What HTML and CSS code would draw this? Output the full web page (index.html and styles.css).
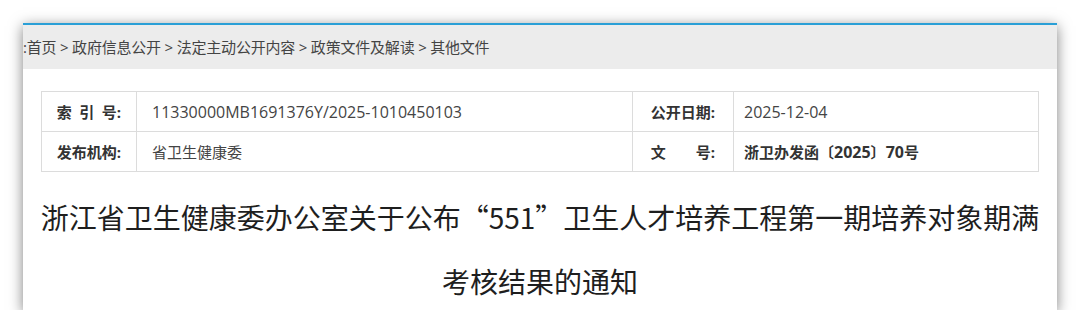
FILE: index.html
```html
<!DOCTYPE html>
<html lang="zh-CN">
<head>
    <meta charset="UTF-8">
    <meta name="viewport" content="width=device-width, initial-scale=1.0">
    <title>其他文件</title>
    <link rel="stylesheet" href="styles.css">
</head>
<body>
    <div class="page">
        <div class="crumbs">:首页 &gt; 政府信息公开 &gt; 法定主动公开内容 &gt; 政策文件及解读 &gt; 其他文件</div>

        <table class="info">
            <colgroup>
                <col class="c-label">
                <col class="c-value">
                <col class="c-label2">
                <col>
            </colgroup>
            <tr>
                <th><span class="lbl">索引号</span>:</th>
                <td class="num">11330000MB1691376Y/2025-1010450103</td>
                <th><span class="lbl">公开日期</span>:</th>
                <td class="v-right num">2025-12-04</td>
            </tr>
            <tr>
                <th><span class="lbl">发布机构</span>:</th>
                <td>省卫生健康委</td>
                <th><span class="lbl">文号</span>:</th>
                <td class="v-right strong">浙卫办发函〔<span class="num">2025</span>〕<span class="num">70</span>号</td>
            </tr>
        </table>

        <h1 class="title">浙江省卫生健康委办公室关于公布“551”卫生人才培养工程第一期培养对象期满考核结果的通知</h1>
    </div>
</body>
</html>
```

FILE: styles.css
```css
body {
    margin: 0;
    background: #fff;
    font-family: "Open Sans", "Noto Sans CJK SC", sans-serif;
    color: #333;
}
.page {
    width: 1034px;
    height: 285px;
    margin: 23px auto 0;
    border-top: 2px solid #2a9fd6;
    background: #fff;
    box-shadow: 0 3px 13px rgba(0, 0, 0, 0.5);
    overflow: hidden;
}
.crumbs {
    height: 44px;
    line-height: 44px;
    background: #ececec;
    font-size: 15px;
    color: #444;
    white-space: nowrap;
    letter-spacing: -0.2px;
}
.info {
    width: 998px;
    margin: 22px 18px 0;
    border-collapse: collapse;
    table-layout: fixed;
    font-size: 15px;
}
.c-label {
    width: 95px;
}
.c-value {
    width: 496px;
}
.c-label2 {
    width: 101px;
}
.info th,
.info td {
    height: 39px;
    padding: 0;
    border: 1px solid #dcdcdc;
    white-space: nowrap;
}
.info th {
    text-align: center;
    font-weight: bold;
    color: #333;
}
.info td {
    padding-left: 15px;
    color: #444;
}
.info td.v-right {
    padding-left: 10px;
}
.info td.strong {
    font-weight: bold;
    color: #333;
}
.num {
    font-size: 16px;
}
.lbl {
    display: inline-block;
    width: 60px;
    text-align: justify;
    text-align-last: justify;
}
.title {
    margin: 13px 14px 0;
    font-family: "Noto Sans CJK SC", sans-serif;
    font-size: 28px;
    font-weight: normal;
    line-height: 64px;
    text-align: center;
    color: #1e1e1e;
}
```
